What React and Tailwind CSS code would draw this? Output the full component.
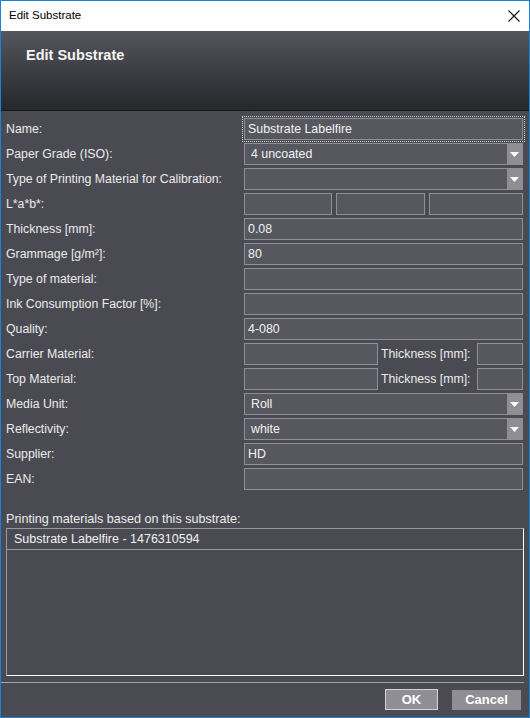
import React from 'react';

const Field = ({ value = '', focused = false }) => {
    const box = (
        <div className="h-[22px] w-full bg-[#57575f] border border-[#8f8f94] text-[12.4px] text-[#f2f2f2] leading-[20px] pl-[3px] truncate">
            {value}
        </div>
    );
    if (!focused) return box;
    // dotted focus ring around the input
    return <div className="w-full p-[1px] outline outline-1 outline-dotted outline-[#d8d8d8] -m-[1px] box-content">{box}</div>;
};

const Combo = ({ value = '' }) => (
    <div className="h-[22px] w-full bg-[#57575f] border border-[#8f8f94] flex text-[12.4px] text-[#f2f2f2]">
        <div className="flex-1 pl-[6px] leading-[20px] truncate">{value}</div>
        <div className="w-[15px] bg-[#8e8e94] flex items-center justify-center">
            <svg width="9" height="5" viewBox="0 0 9 5"><path d="M0 0h9L4.5 5z" fill="#ffffff" /></svg>
        </div>
    </div>
);

const Row = ({ label, children }) => (
    <div className="flex items-center h-[22px]">
        <div className="w-[238px] text-[12.3px] text-[#ececec] shrink-0 pt-[1px]">{label}</div>
        <div className="flex-1 flex items-center">{children}</div>
    </div>
);

const Split = () => (
    <div className="flex items-center w-full">
        <div className="w-[134px]"><Field /></div>
        <div className="flex-1 pl-[3px] text-[12.3px] text-[#ececec] whitespace-nowrap">Thickness [mm]:</div>
        <div className="w-[46px]"><Field /></div>
    </div>
);

export default function App() {
    return (
        <div className="w-[530px] h-[718px] border border-[#1883d7] flex flex-col bg-[#4a4a52] font-['Liberation_Sans',Arial,sans-serif] overflow-hidden">
            {/* Title bar */}
            <div className="h-[30px] bg-white flex items-center justify-between pl-[8px] pr-[8px] shrink-0">
                <span className="text-[11.5px] text-black">Edit Substrate</span>
                <svg width="12" height="12" viewBox="0 0 12 12" className="mr-[1px]">
                    <path d="M0.5 0.5L11.5 11.5M11.5 0.5L0.5 11.5" stroke="#111" strokeWidth="1.1" />
                </svg>
            </div>

            {/* Header */}
            <div className="h-[80px] shrink-0 bg-gradient-to-b from-[#55565e] to-[#27282c] border-b border-[#18181b] pl-[25px] pt-[12px]">
                <span className="text-[14.5px] font-bold text-[#f4f4f4]">Edit Substrate</span>
            </div>

            {/* Form */}
            <div className="flex flex-col gap-[3px] pl-[5px] pr-[6px] pt-[7px]">
                <Row label="Name:"><Field value="Substrate Labelfire" focused /></Row>
                <Row label="Paper Grade (ISO):"><Combo value="4 uncoated" /></Row>
                <Row label="Type of Printing Material for Calibration:"><Combo /></Row>
                <Row label="L*a*b*:">
                    <div className="flex w-full gap-[4px]">
                        <div className="w-[88px]"><Field /></div>
                        <div className="w-[89px]"><Field /></div>
                        <div className="flex-1"><Field /></div>
                    </div>
                </Row>
                <Row label="Thickness [mm]:"><Field value="0.08" /></Row>
                <Row label="Grammage [g/m²]:"><Field value="80" /></Row>
                <Row label="Type of material:"><Field /></Row>
                <Row label="Ink Consumption Factor [%]:"><Field /></Row>
                <Row label="Quality:"><Field value="4-080" /></Row>
                <Row label="Carrier Material:"><Split /></Row>
                <Row label="Top Material:"><Split /></Row>
                <Row label="Media Unit:"><Combo value="Roll" /></Row>
                <Row label="Reflectivity:"><Combo value="white" /></Row>
                <Row label="Supplier:"><Field value="HD" /></Row>
                <Row label="EAN:"><Field /></Row>
            </div>

            {/* Printing materials list */}
            <div className="pl-[5px] pr-[5px] pt-[22px]">
                <div className="text-[12.6px] text-[#ececec] leading-[15px]">Printing materials based on this substrate:</div>
                <div className="h-[148px] mt-[1px] border-t border-l border-[#9a9a9e] border-r border-b border-r-white border-b-white">
                    <div className="h-[21px] border-b border-[#9a9a9e] pl-[7px] text-[12.5px] text-[#f2f2f2] leading-[20px]">
                        Substrate Labelfire - 1476310594
                    </div>
                </div>
            </div>

            {/* Footer */}
            <div className="mt-[6px] mr-[5px] border-t border-[#a6a6aa] flex justify-end gap-[14px] pt-[6px] pr-[3px]">
                <button className="w-[53px] h-[21px] bg-[#8e8e94] border border-[#d4d4d8] text-[13px] font-bold text-white">OK</button>
                <button className="w-[69px] h-[20px] mt-[1px] bg-[#8e8e94] text-[13px] font-bold text-white">Cancel</button>
            </div>
        </div>
    );
}
